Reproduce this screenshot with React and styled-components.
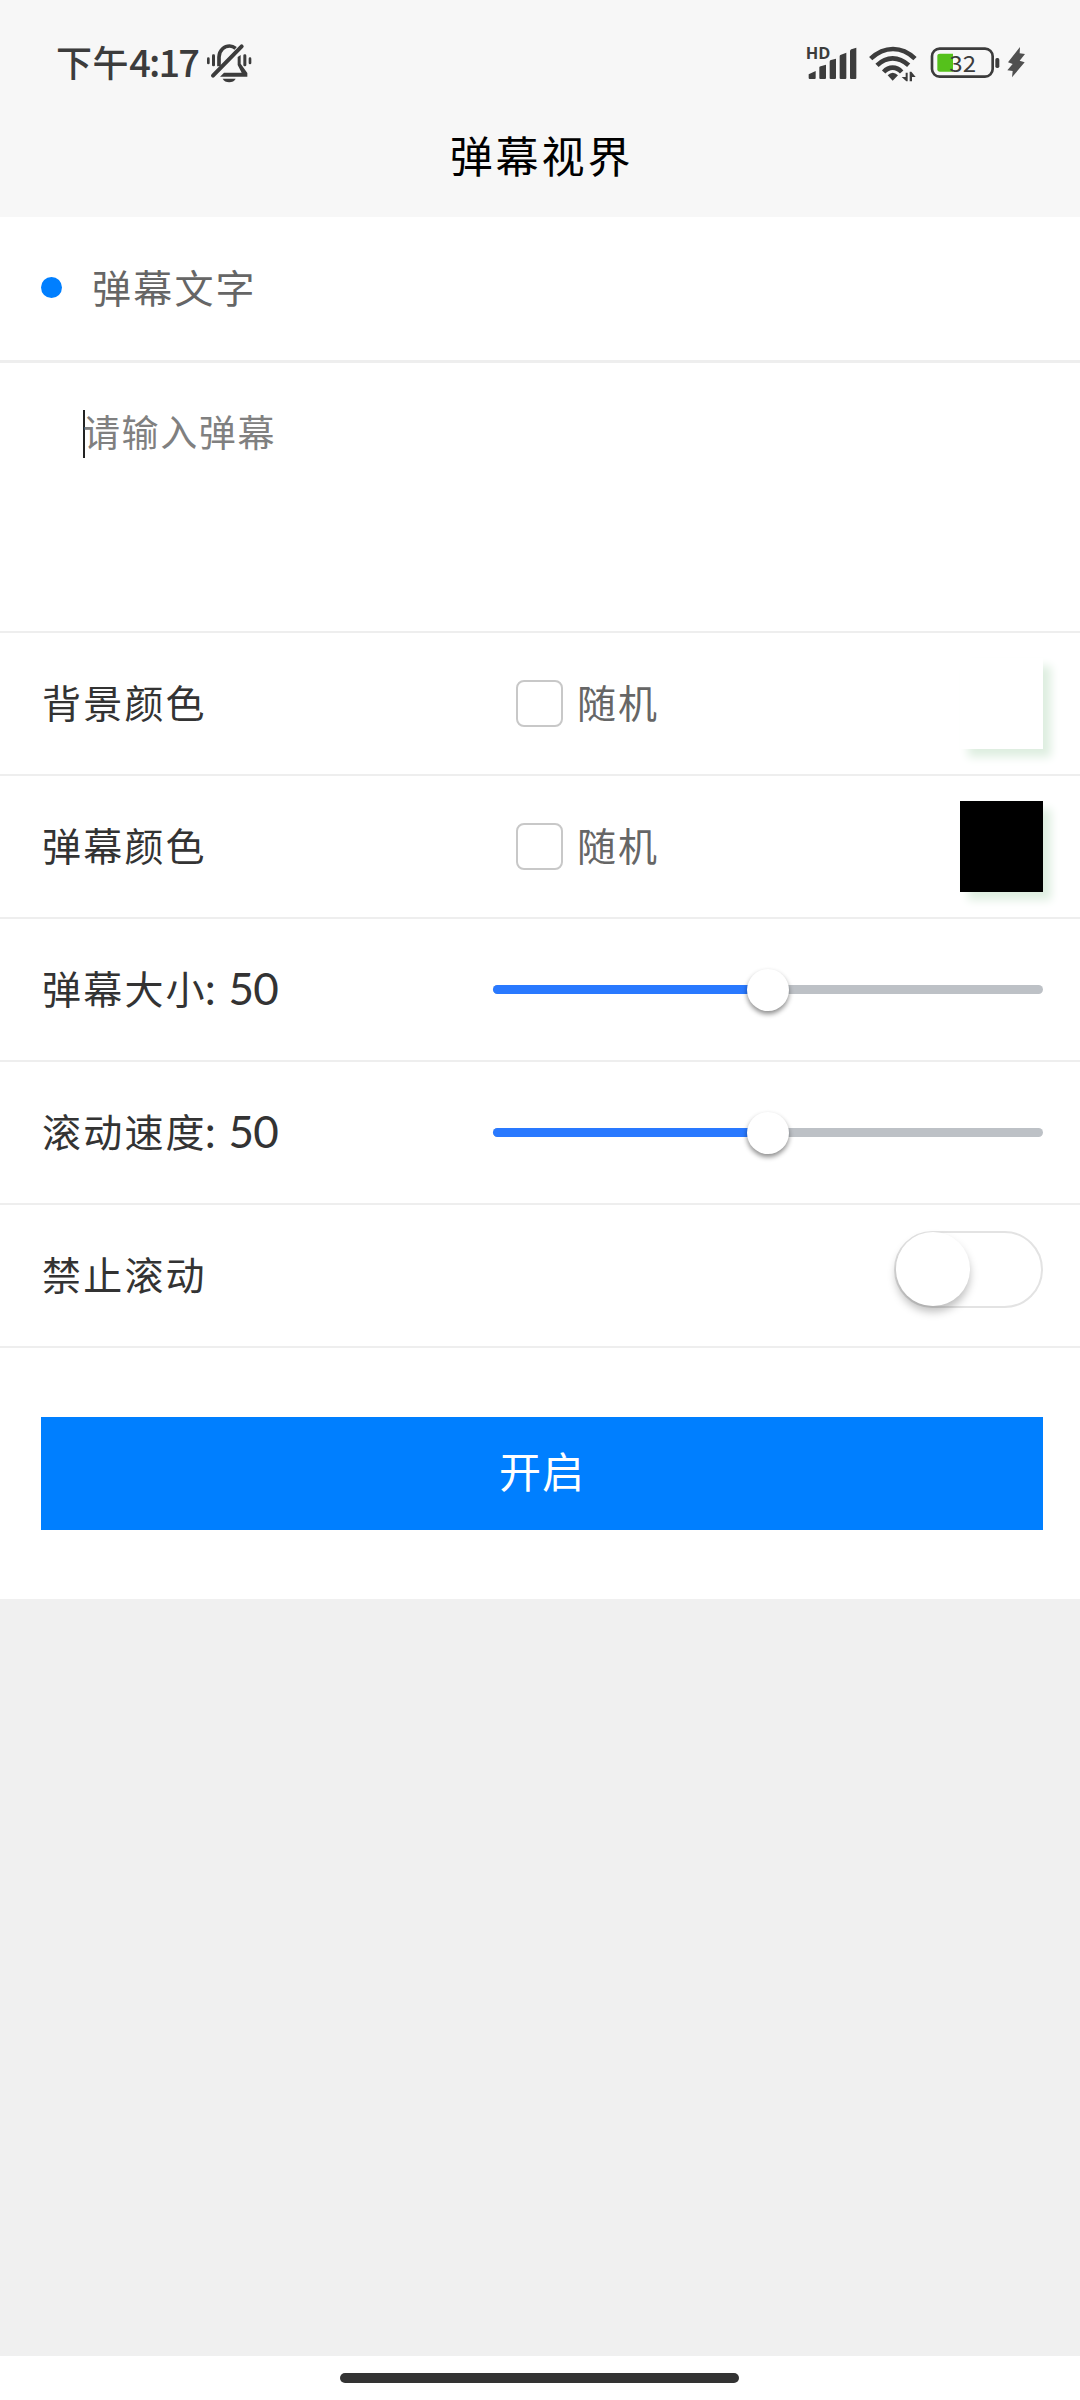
import React, { useState } from "react";
import styled, { createGlobalStyle } from "styled-components";

const GlobalStyle = createGlobalStyle`
  * {
    box-sizing: border-box;
    margin: 0;
    padding: 0;
  }

  body {
    background: #f0f0f0;
    font-family: "Noto Sans CJK SC", "Noto Sans", sans-serif;
    color: #333;
  }
`;

const Page = styled.div`
  display: flex;
  flex-direction: column;
  width: 1080px;
  height: 2400px;
  overflow: hidden;
  background: #f0f0f0;
`;

const StyledStatusBar = styled.div`
  display: flex;
  justify-content: space-between;
  height: 110px;
  padding: 0 55px 0 56px;
  background: #f7f7f7;

  .left,
  .right {
    display: flex;
    align-items: flex-start;
  }

  svg {
    display: block;
    overflow: visible;
    fill: #3c3c3c;
  }

  .bell {
    margin: 43px 0 0 9px;
  }

  .right {
    padding-top: 47px;
  }

  .wifi {
    margin-left: 12px;
  }

  .battery {
    margin-left: 13px;
  }

  .bolt {
    margin-left: 7px;
  }
`;

const Clock = styled.p`
  display: flex;
  height: 60px;
  margin-top: 31px;
  color: #3c3c3c;
  font-size: 36px;
  font-weight: 500;
  line-height: 60px;
  letter-spacing: 0.6px;

  span {
    font-size: 38px;
    letter-spacing: -1.9px;
  }
`;

const Title = styled.h1`
  height: 107px;
  padding-left: 3px;
  background: #f7f7f7;
  color: #000;
  font-size: 43px;
  font-weight: 400;
  line-height: 88px;
  letter-spacing: 2.9px;
  text-align: center;
`;

const Form = styled.div`
  flex: none;
  height: 1382px;
  background: #fff;
`;

const Row = styled.div`
  display: flex;
  align-items: center;
  justify-content: space-between;
  height: ${({ $height }) => $height || 143}px;
  padding: 0 37px 0 42px;
  border-bottom: ${({ $line }) => $line || 2}px solid #eee;
`;

const Heading = styled(Row)`
  justify-content: flex-start;
  padding-left: 41px;
  color: #666;

  &::before {
    content: "";
    width: 21px;
    height: 21px;
    margin: 0 30px 2px 0;
    border-radius: 50%;
    background: #007fff;
  }
`;

const Label = styled.p`
  flex: ${({ $grow }) => ($grow ? "none" : "0 0 474px")};
  padding-bottom: 6px;
  font-size: 39px;
  line-height: 60px;
  letter-spacing: 2.2px;
  white-space: pre;

  span {
    margin-left: -2px;
    font-family: Lato, sans-serif;
    font-size: 44px;
    line-height: 0;
    letter-spacing: -0.8px;
    word-spacing: 3px;
    vertical-align: -1px;
  }
`;

const InputArea = styled(Row)`
  align-items: flex-start;
  justify-content: flex-start;
  padding: 47px 0 0 83px;
`;

const Caret = styled.i`
  width: 2px;
  height: 48px;
  background: #222;
`;

const Placeholder = styled.p`
  margin: -3px 0 0 -2px;
  color: #808080;
  font-size: 37px;
  line-height: 48px;
  letter-spacing: 1.6px;
`;

const CheckLabel = styled.label`
  display: flex;
  flex: 1;
  align-items: center;
  color: #666;
  font-size: 39px;
  line-height: 60px;
  letter-spacing: 2px;

  span {
    padding-bottom: 6px;
  }
`;

const CheckBox = styled.i`
  width: 47px;
  height: 47px;
  margin-right: 14px;
  border: 2px solid #c8c8c8;
  border-radius: 8px;
  background: #fff;
`;

const Swatch = styled.div`
  width: 83px;
  height: 91px;
  background: ${({ $color }) => $color};
  box-shadow: 8px 8px 9px #deeee0;
`;

const Track = styled.div`
  display: flex;
  align-items: center;
  width: 550px;
  height: 9px;
  border-radius: 5px;
  background: #bdc1c6;
`;

const Filled = styled.div`
  height: 9px;
  border-radius: 5px 0 0 5px;
  background: #2979ff;
`;

const Thumb = styled.div`
  flex: none;
  width: 42px;
  height: 42px;
  margin-left: -21px;
  border-radius: 50%;
  background: #fff;
  box-shadow: 0 3px 5px rgba(0, 0, 0, 0.45);
`;

const Toggle = styled.div`
  display: flex;
  width: 149px;
  height: 77px;
  margin-bottom: 12px;
  border: 2px solid #e3e3e3;
  border-radius: 39px;

  &::before {
    content: "";
    width: 74px;
    height: 74px;
    margin-top: -1px;
    border-radius: 50%;
    background: #fff;
    box-shadow: 0 6px 8px rgba(0, 0, 0, 0.25);
  }
`;

const StartButton = styled.button`
  display: block;
  width: 1002px;
  height: 113px;
  margin: 69px 0 0 41px;
  padding-bottom: 8px;
  border: none;
  background: #007fff;
  color: #fff;
  font-family: inherit;
  font-size: 42px;
  letter-spacing: 1px;
`;

const HomeBar = styled.div`
  height: 44px;
  margin-top: auto;
  padding: 17px 341px 0 340px;
  background: #fff;

  &::before {
    content: "";
    display: block;
    height: 10px;
    border-radius: 5px;
    background: #333;
  }
`;

function StatusBar() {
  return (
    <StyledStatusBar>
      <div className="left">
        <Clock>
          下午<span>4:17</span>
        </Clock>
        <svg className="bell" width="45" height="40" viewBox="0 0 135 120">
          <rect x="0" y="43" width="8" height="21" rx="4" />
          <rect x="15" y="34" width="9" height="36" rx="4" />
          <rect x="109" y="34" width="9" height="36" rx="4" />
          <rect x="125" y="43" width="8" height="21" rx="4" />
          <path
            d="M36 70V42C37 20 53 9 68 9C75 9 81 12 86 16"
            fill="none"
            stroke="#3c3c3c"
            strokeWidth="11"
          />
          <path d="M92 42L101 36V62L121 90V101H39L51 89H104L92 66Z" />
          <path
            d="M18 98L104 10"
            fill="none"
            stroke="#3c3c3c"
            strokeWidth="12"
            strokeLinecap="round"
          />
          <path d="M47 107H86C80 121 53 121 47 107Z" />
        </svg>
      </div>
      <div className="right">
        <svg width="51" height="34" viewBox="0 0 153 102">
          <text
            x="-1"
            y="36"
            fontFamily="Open Sans"
            fontSize="48"
            fontWeight="700"
            textLength="74"
            lengthAdjust="spacingAndGlyphs"
          >
            HD
          </text>
          <path d="M8 82L29 72V93Q29 96 26 96H11Q8 96 8 93Z" />
          <path d="M40 61Q41 58 44 58L60 53V93Q60 96 57 96H43Q40 96 40 93Z" />
          <path d="M71 44Q71 40 75 39L90 35V93Q90 96 87 96H74Q71 96 71 93Z" />
          <path d="M101 28Q101 24 105 23L121 17V93Q121 96 118 96H104Q101 96 101 93Z" />
          <path d="M132 13Q132 8 136 7L151 2V93Q151 96 148 96H135Q132 96 132 93Z" />
        </svg>
        <svg className="wifi" width="48" height="36" viewBox="0 0 144 108">
          <g fill="none" stroke="#3c3c3c" strokeWidth="14">
            <path d="M5 35Q36 6 72 6T138 35" />
            <path d="M24 55Q46 34 71 34T119 55" />
            <path d="M44 75Q56 62 71 62T98 75" />
          </g>
          <path d="M56 85Q71 70 87 85L71 101Z" />
          <path d="M110 77H116V103H112L98 90H110Z" />
          <path d="M122 103V74H127L140 90H129V103Z" />
        </svg>
        <svg className="battery" width="70" height="34" viewBox="0 0 210 102">
          <rect
            x="6"
            y="5"
            width="182"
            height="84"
            rx="23"
            fill="none"
            stroke="#3c3c3c"
            strokeWidth="8"
          />
          <path d="M30 20H69V74H30Q22 74 22 67V27Q22 20 30 20Z" fill="#55c11b" />
          <rect x="196" y="33" width="12" height="30" rx="5" />
          <text
            x="58"
            y="74"
            fontFamily="Noto Sans CJK SC"
            fontSize="68"
            textLength="80"
            lengthAdjust="spacingAndGlyphs"
          >
            32
          </text>
        </svg>
        <svg className="bolt" width="18" height="31" viewBox="0 0 54 93">
          <path
            d="M39 0L3 46L17 51L1 70L17 72L15 91L53 46L38 41L54 21L38 19Z"
            fill="#505050"
          />
        </svg>
      </div>
    </StyledStatusBar>
  );
}

function ColorRow({ label, color }) {
  const [random, setRandom] = useState(false);

  return (
    <Row>
      <Label>{label}</Label>
      <CheckLabel onClick={() => setRandom(!random)}>
        <CheckBox />
        <span>随机</span>
      </CheckLabel>
      <Swatch $color={color} />
    </Row>
  );
}

function SliderRow({ label, value }) {
  return (
    <Row>
      <Label $grow>
        {label}
        <span>: {value}</span>
      </Label>
      <Track>
        <Filled style={{ width: `${value}%` }} />
        <Thumb />
      </Track>
    </Row>
  );
}

function App() {
  return (
    <>
      <GlobalStyle />
      <Page>
        <StatusBar />
        <Title>弹幕视界</Title>
        <Form>
          <Heading $height={146} $line={3}>
            <Label>弹幕文字</Label>
          </Heading>
          <InputArea $height={270}>
            <Caret />
            <Placeholder>请输入弹幕</Placeholder>
          </InputArea>
          <ColorRow label="背景颜色" color="#fff" />
          <ColorRow label="弹幕颜色" color="#000" />
          <SliderRow label="弹幕大小" value={50} />
          <SliderRow label="滚动速度" value={50} />
          <Row>
            <Label $grow>禁止滚动</Label>
            <Toggle />
          </Row>
          <StartButton>开启</StartButton>
        </Form>
        <HomeBar />
      </Page>
    </>
  );
}

export default App;
